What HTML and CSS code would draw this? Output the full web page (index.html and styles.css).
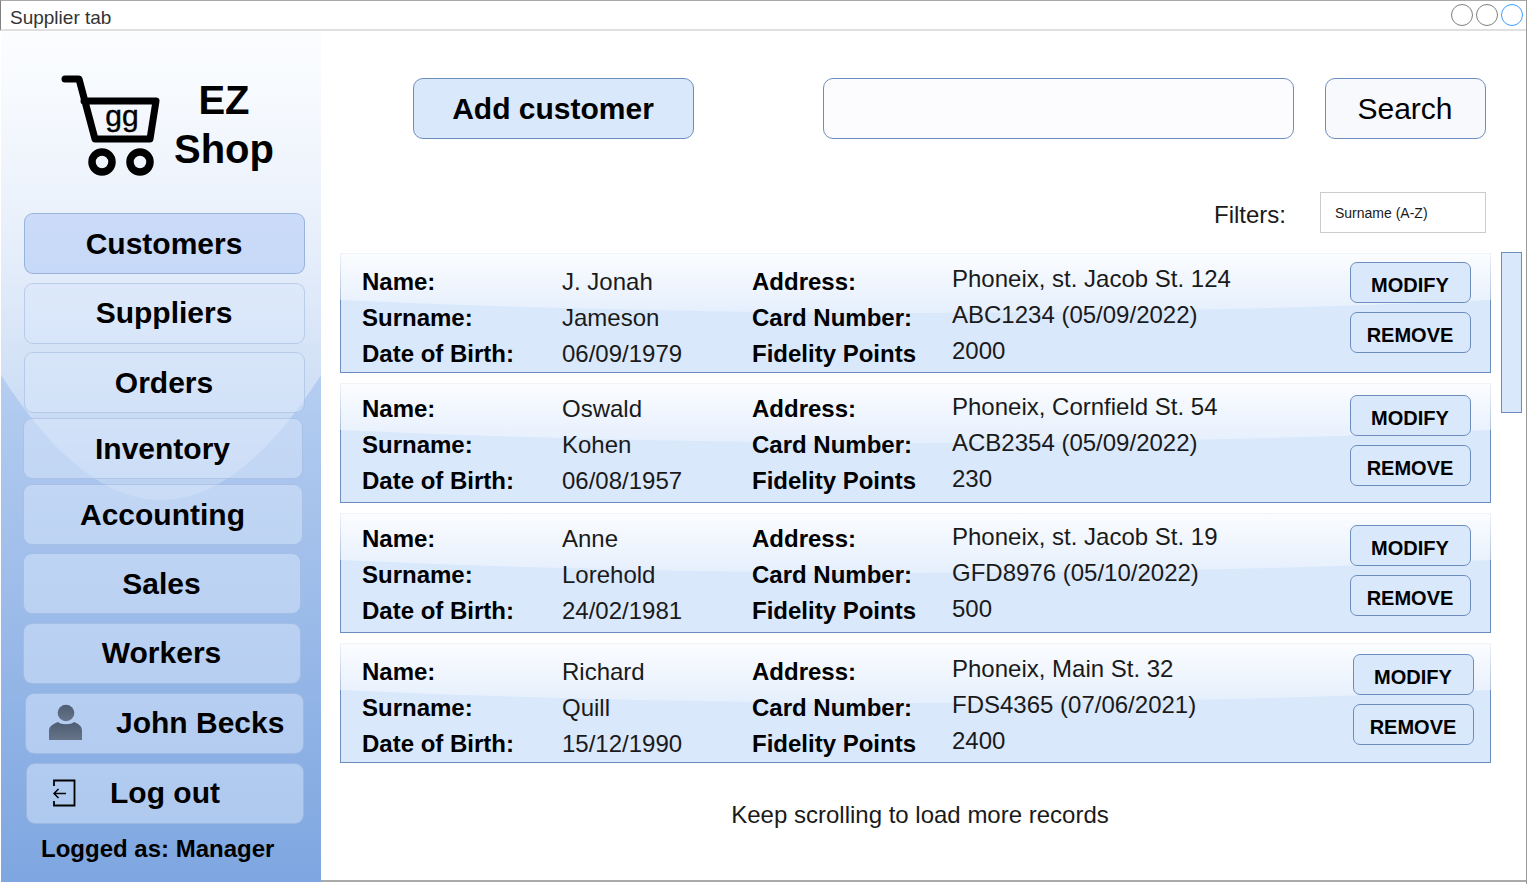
FILE: index.html
```html
<!DOCTYPE html>
<html lang="en">
<head>
    <meta charset="UTF-8">
    <meta name="viewport" content="width=device-width, initial-scale=1.0">
    <title>Supplier tab</title>
    <link rel="stylesheet" href="styles.css">
</head>
<body>
    <div class="window">
        <header class="titlebar">
            <span class="title">Supplier tab</span>
            <div class="dots">
                <span class="dot"></span>
                <span class="dot"></span>
                <span class="dot dot-active"></span>
            </div>
        </header>

        <div class="layout">
            <aside class="sidebar">
                <div class="logo">
                    <svg class="cart" width="100" height="102" viewBox="0 0 100 102">
                        <path d="M4 4H18L34 64H89L95 26H23" fill="none" stroke="#000" stroke-width="7" stroke-linecap="round" stroke-linejoin="round"/>
                        <circle cx="41" cy="87" r="10" fill="none" stroke="#000" stroke-width="7.500"/>
                        <circle cx="79" cy="87" r="10" fill="none" stroke="#000" stroke-width="7.500"/>
                        <text x="61" y="51" text-anchor="middle" class="cart-text">gg</text>
                    </svg>
                    <div class="brand">
                        <span>EZ</span>
                        <span>Shop</span>
                    </div>
                </div>

                <nav class="nav">
                    <a class="nav-item nav-active nav-customers">Customers</a>
                    <a class="nav-item nav-suppliers">Suppliers</a>
                    <a class="nav-item nav-orders">Orders</a>
                    <a class="nav-item nav-inventory">Inventory</a>
                    <a class="nav-item nav-accounting">Accounting</a>
                    <a class="nav-item nav-sales">Sales</a>
                    <a class="nav-item nav-workers">Workers</a>
                    <a class="nav-item nav-user">
                        <svg class="user-icon" width="34" height="36" viewBox="0 0 34 36">
                            <defs>
                                <linearGradient id="userFill" x1="0" y1="0" x2="0" y2="1">
                                    <stop offset="0" stop-color="#4f5d73"/>
                                    <stop offset="1" stop-color="#667388"/>
                                </linearGradient>
                            </defs>
                            <circle cx="17" cy="9" r="8.300" fill="url(#userFill)"/>
                            <path d="M0 36V27C0 22 4 20 9 18C12 21 22 21 25 18C30 20 33 22 33 27V36Z" fill="url(#userFill)"/>
                        </svg>
                        <span>John Becks</span>
                    </a>
                    <a class="nav-item nav-logout">
                        <svg width="24" height="28" viewBox="0 0 24 28">
                            <path d="M2 7V1.500H22.500V26.500H2V22" fill="none" stroke="#000" stroke-width="1.800"/>
                            <path d="M14 14.500H2M6.500 10L2 14.500L6.500 19" fill="none" stroke="#000" stroke-width="1.500"/>
                        </svg>
                        <span>Log out</span>
                    </a>
                </nav>

                <div class="logged">Logged as: Manager</div>
            </aside>

            <main class="content">
                <div class="toolbar">
                    <button class="btn btn-add">Add customer</button>
                    <input class="search-input" type="text">
                    <button class="btn btn-search">Search</button>
                </div>

                <div class="filters">
                    <span class="filters-label">Filters:</span>
                    <div class="filter-box">Surname (A-Z)</div>
                </div>

                <div class="records">
                    <div class="list">
                        <section class="card card-a">
                            <div class="col col-key"><b>Name:</b><b>Surname:</b><b>Date of Birth:</b></div>
                            <div class="col col-val"><span>J. Jonah</span><span>Jameson</span><span>06/09/1979</span></div>
                            <div class="col col-key"><b>Address:</b><b>Card Number:</b><b>Fidelity Points</b></div>
                            <div class="col col-addr"><span>Phoneix, st. Jacob St. 124</span><span>ABC1234 (05/09/2022)</span><span>2000</span></div>
                            <div class="actions"><button class="small-btn">MODIFY</button><button class="small-btn">REMOVE</button></div>
                        </section>
                        <section class="card card-b">
                            <div class="col col-key"><b>Name:</b><b>Surname:</b><b>Date of Birth:</b></div>
                            <div class="col col-val"><span>Oswald</span><span>Kohen</span><span>06/08/1957</span></div>
                            <div class="col col-key"><b>Address:</b><b>Card Number:</b><b>Fidelity Points</b></div>
                            <div class="col col-addr"><span>Phoneix, Cornfield St. 54</span><span>ACB2354 (05/09/2022)</span><span>230</span></div>
                            <div class="actions"><button class="small-btn">MODIFY</button><button class="small-btn">REMOVE</button></div>
                        </section>
                        <section class="card card-b">
                            <div class="col col-key"><b>Name:</b><b>Surname:</b><b>Date of Birth:</b></div>
                            <div class="col col-val"><span>Anne</span><span>Lorehold</span><span>24/02/1981</span></div>
                            <div class="col col-key"><b>Address:</b><b>Card Number:</b><b>Fidelity Points</b></div>
                            <div class="col col-addr"><span>Phoneix, st. Jacob St. 19</span><span>GFD8976 (05/10/2022)</span><span>500</span></div>
                            <div class="actions"><button class="small-btn">MODIFY</button><button class="small-btn">REMOVE</button></div>
                        </section>
                        <section class="card card-d">
                            <div class="col col-key"><b>Name:</b><b>Surname:</b><b>Date of Birth:</b></div>
                            <div class="col col-val"><span>Richard</span><span>Quill</span><span>15/12/1990</span></div>
                            <div class="col col-key"><b>Address:</b><b>Card Number:</b><b>Fidelity Points</b></div>
                            <div class="col col-addr"><span>Phoneix, Main St. 32</span><span>FDS4365 (07/06/2021)</span><span>2400</span></div>
                            <div class="actions"><button class="small-btn">MODIFY</button><button class="small-btn">REMOVE</button></div>
                        </section>
                    </div>
                    <div class="scrollbar"></div>
                </div>

                <p class="more">Keep scrolling to load more records</p>
            </main>
        </div>
    </div>
</body>
</html>
```

FILE: styles.css
```css
* {
    box-sizing: border-box;
}
html, body {
    margin: 0;
    height: 884px;
    overflow: hidden;
    background: #ffffff;
}
body {
    font-family: "Liberation Sans", Arial, sans-serif;
    color: #000000;
}
.window {
    height: 884px;
    display: flex;
    flex-direction: column;
    border-right: 1px solid #9a9a9a;
}

/* title bar */
.titlebar {
    height: 31px;
    flex: none;
    display: flex;
    align-items: center;
    justify-content: space-between;
    padding: 0 3px 0 10px;
    border-top: 1px solid #aaaaaa;
    border-left: 1px solid #808080;
    border-bottom: 2px solid #e0e0e0;
}
.title {
    font-size: 19px;
    color: #333333;
    margin-left: -1px;
    margin-top: 6px;
}
.dots {
    display: flex;
    gap: 3px;
}
.dot {
    width: 22px;
    height: 22px;
    border: 1.5px solid #808080;
    border-radius: 50%;
}
.dot-active {
    border-color: #3d9eff;
}

/* sidebar */
.layout {
    display: flex;
    height: 851px;
}
.sidebar {
    position: relative;
    width: 320px;
    margin-left: 1px;
    flex: none;
    height: 851px;
    background: linear-gradient(180deg, #dae8fc 0%, #7ea6e0 100%);
}
.sidebar::before {
    content: "";
    position: absolute;
    top: 0;
    left: 0;
    right: 0;
    height: 470px;
    clip-path: path("M0 0H320V344Q160 594 0 344Z");
    background: linear-gradient(180deg, rgba(255, 255, 255, 0.9), rgba(255, 255, 255, 0.2));
}
.sidebar > * {
    position: relative;
}
.logo {
    height: 182px;
    display: flex;
    align-items: flex-start;
    padding: 44px 0 0 60px;
}
.cart-text {
    font-size: 30px;
    font-family: "Liberation Sans", Arial, sans-serif;
    stroke: #000000;
    stroke-width: 0.4px;
}
.brand {
    display: flex;
    flex-direction: column;
    align-items: center;
    width: 100px;
    margin-left: 13px;
    margin-top: 1px;
    font-size: 40px;
    font-weight: bold;
    line-height: 49px;
}
.nav {
    display: flex;
    flex-direction: column;
}
.nav-item {
    height: 61px;
    display: flex;
    align-items: center;
    justify-content: center;
    padding: 0 1px 1px 0;
    font-size: 30px;
    font-weight: bold;
    background: rgba(218, 232, 252, 0.5);
    border: 1px solid rgba(108, 142, 191, 0.3);
    border-radius: 9px;
}
.nav-active {
    background: rgba(172, 197, 245, 0.5);
    border-color: rgba(108, 142, 191, 0.5);
}
.nav-customers, .nav-orders, .nav-inventory, .nav-accounting, .nav-sales {
    padding-bottom: 0;
}
.nav-customers, .nav-suppliers {
    margin-left: 23px;
    width: 281px;
    margin-bottom: 9px;
}
.nav-suppliers {
    margin-bottom: 8px;
}
.nav-orders {
    margin-left: 23px;
    width: 281px;
    margin-bottom: 5px;
}
.nav-inventory {
    margin-left: 22px;
    width: 280px;
    margin-bottom: 5px;
}
.nav-accounting {
    margin-left: 22px;
    width: 280px;
    margin-bottom: 8px;
}
.nav-sales, .nav-workers {
    margin-left: 22px;
    width: 278px;
    margin-bottom: 9px;
}
.nav-user {
    margin-left: 24px;
    width: 279px;
    margin-bottom: 9px;
    justify-content: flex-start;
    padding-left: 23px;
    gap: 33px;
}
.user-icon {
    margin-top: -2px;
}
.nav-logout {
    margin-left: 25px;
    width: 278px;
    justify-content: flex-start;
    padding-left: 25px;
    gap: 34px;
}
.logged {
    margin: 10px 0 0 40px;
    font-size: 24px;
    font-weight: bold;
    line-height: 30px;
}

/* main area */
.content {
    flex: 1;
    min-width: 0;
    padding: 47px 0 0 19px;
    border-bottom: 2px solid #aaaaaa;
    height: 851px;
}
.toolbar {
    display: flex;
    height: 61px;
    padding-left: 73px;
}
.btn {
    height: 61px;
    padding: 0 1px 0 0;
    font-family: inherit;
    font-size: 30px;
    border: 1px solid #6c8ebf;
    border-radius: 10px;
    color: #000000;
}
.btn-add {
    width: 281px;
    font-weight: bold;
    background: #dae8fc;
}
.search-input {
    width: 471px;
    height: 61px;
    margin-left: 129px;
    background: #fcfcfe;
    border: 1px solid #6c8ebf;
    border-radius: 10px;
}
.btn-search {
    width: 161px;
    margin-left: 31px;
    background: #f7f9fd;
}
.filters {
    display: flex;
    justify-content: flex-end;
    align-items: center;
    gap: 34px;
    height: 41px;
    margin-top: 53px;
    padding-right: 40px;
    font-size: 24px;
    color: #1a1a1a;
}
.filters-label {
    margin-top: 4px;
}
.filter-box {
    width: 166px;
    height: 41px;
    border: 1px solid #cccccc;
    padding: 0 14px;
    font-size: 14px;
    line-height: 41px;
}

/* records */
.records {
    display: flex;
    gap: 10px;
    margin-top: 19px;
}
.list {
    width: 1151px;
    display: flex;
    flex-direction: column;
    gap: 10px;
    margin-top: 1px;
}
.card {
    position: relative;
    height: 120px;
    display: flex;
    align-items: flex-start;
    padding-left: 21px;
    font-size: 24px;
    background: #dae8fc;
    border: 1px solid #6c8ebf;
}
.card::before {
    content: "";
    position: absolute;
    top: -1px;
    left: -1px;
    right: -1px;
    height: 60px;
    clip-path: path("M0 0H1151V47Q575 73 0 47Z");
    background: linear-gradient(180deg, rgba(255, 255, 255, 0.9), rgba(255, 255, 255, 0.3));
}
.card > * {
    position: relative;
}
.card-a {
    --key-top: 10px;
    --addr-top: 7px;
    --btn-top: 8px;
    --btn-right: 19px;
}
.card-b {
    --key-top: 7px;
    --addr-top: 5px;
    --btn-top: 11px;
    --btn-right: 19px;
}
.card-d {
    --key-top: 10px;
    --addr-top: 7px;
    --btn-top: 10px;
    --btn-right: 16px;
}
.col {
    display: flex;
    flex-direction: column;
    line-height: 36px;
    white-space: nowrap;
    color: #1a1a1a;
}
.col b {
    font-weight: bold;
    color: #000000;
}
.col-key {
    width: 200px;
    padding-top: var(--key-top);
}
.col-val {
    width: 190px;
    padding-top: var(--key-top);
}
.col-addr {
    flex: 1;
    padding-top: var(--addr-top);
}
.actions {
    display: flex;
    flex-direction: column;
    gap: 9px;
    padding-top: var(--btn-top);
    margin-right: var(--btn-right);
}
.small-btn {
    width: 121px;
    height: 41px;
    font-family: inherit;
    font-size: 20px;
    font-weight: bold;
    color: #000000;
    background: #dae8fc;
    border: 1px solid #6c8ebf;
    border-radius: 7px;
    padding: 6px 1px 0 0;
}
.scrollbar {
    width: 21px;
    height: 161px;
    background: #dae8fc;
    border: 1px solid #6c8ebf;
}
.more {
    margin: 37px 0 0;
    padding-left: 9px;
    width: 1151px;
    text-align: center;
    font-size: 24px;
    line-height: 30px;
    color: #1a1a1a;
}
```
